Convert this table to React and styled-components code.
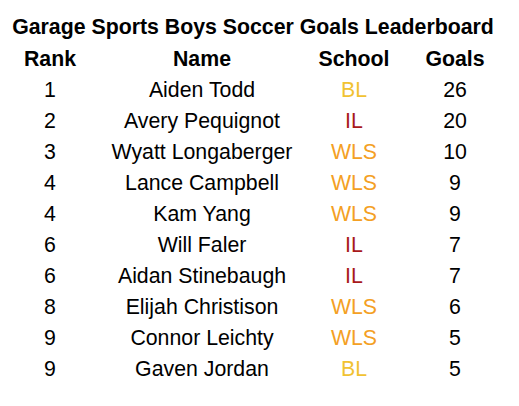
import styled, { createGlobalStyle } from "styled-components";

const Global = createGlobalStyle`
  body {
    margin: 0;
    background: #fff;
    font-family: "Liberation Sans", Arial, sans-serif;
    color: #000;
  }
`;

const Board = styled.div`
  width: 506px;
  padding-top: 11px;
`;

const Title = styled.h1`
  margin: 0;
  height: 33px;
  line-height: 32px;
  font-size: 21.3px;
  font-weight: bold;
  text-align: center;
  white-space: nowrap;
`;

const Grid = styled.div`
  display: grid;
  grid-template-columns: 100px 204px 100px 102px;
  grid-auto-rows: 31px;
`;

const Cell = styled.div`
  display: flex;
  align-items: center;
  justify-content: center;
  font-size: 21.3px;
  font-weight: ${(p) => (p.$head ? "bold" : "normal")};
  color: ${(p) => p.$color || "#000"};
  white-space: nowrap;
`;

const schoolColors = {
  BL: "#f1c232",
  IL: "#a8191b",
  WLS: "#f4a024",
};

const rows = [
  [1, "Aiden Todd", "BL", 26],
  [2, "Avery Pequignot", "IL", 20],
  [3, "Wyatt Longaberger", "WLS", 10],
  [4, "Lance Campbell", "WLS", 9],
  [4, "Kam Yang", "WLS", 9],
  [6, "Will Faler", "IL", 7],
  [6, "Aidan Stinebaugh", "IL", 7],
  [8, "Elijah Christison", "WLS", 6],
  [9, "Connor Leichty", "WLS", 5],
  [9, "Gaven Jordan", "BL", 5],
];

export default function App() {
  return (
    <Board>
      <Global />
      <Title>Garage Sports Boys Soccer Goals Leaderboard</Title>
      <Grid>
        <Cell $head>Rank</Cell>
        <Cell $head>Name</Cell>
        <Cell $head>School</Cell>
        <Cell $head>Goals</Cell>
        {rows.map(([rank, name, school, goals]) => (
          <>
            <Cell key={name + "r"}>{rank}</Cell>
            <Cell key={name + "n"}>{name}</Cell>
            <Cell key={name + "s"} $color={schoolColors[school]}>
              {school}
            </Cell>
            <Cell key={name + "g"}>{goals}</Cell>
          </>
        ))}
      </Grid>
    </Board>
  );
}
